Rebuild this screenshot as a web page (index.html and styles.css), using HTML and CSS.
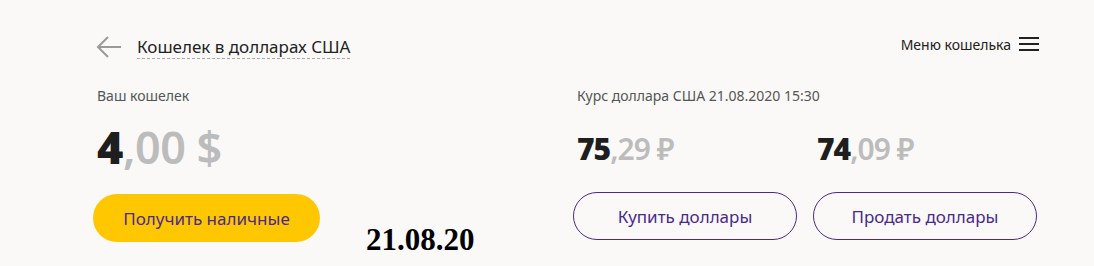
FILE: index.html
```html
<!DOCTYPE html>
<html lang="ru">

<head>
    <meta charset="UTF-8">
    <meta name="viewport" content="width=device-width, initial-scale=1.0">
    <title>Кошелек в долларах США</title>
    <link rel="stylesheet" href="styles.css">
</head>

<body>
    <div class="wallet">

        <!-- Header -->
        <div class="top">
            <div class="back">
                <svg class="back-arrow" width="26" height="24" viewBox="0 0 26 24">
                    <path d="M25 12H2M12 2L2 12l10 10" fill="none" stroke="#9a9a9a" stroke-width="2" />
                </svg>
                <span class="title">Кошелек в долларах США</span>
            </div>
            <div class="menu">
                Меню кошелька
                <svg class="burger" width="20" height="16" viewBox="0 0 20 16">
                    <path d="M0 2h20M0 8h20M0 14h20" stroke="#222" stroke-width="2" />
                </svg>
            </div>
        </div>

        <div class="cols">
            <!-- Balance -->
            <div class="col">
                <div class="label">Ваш кошелек</div>
                <div class="amount big"><b>4</b><span class="cents">,00 $</span></div>
                <div class="actions">
                    <button class="btn btn-yellow">Получить наличные</button>
                    <span class="stamp">21.08.20</span>
                </div>
            </div>

            <!-- Rates -->
            <div class="col">
                <div class="label">Курс доллара США 21.08.2020 15:30</div>
                <div class="rates">
                    <div class="amount"><b>75</b><span class="cents">,29 ₽</span></div>
                    <div class="amount"><b>74</b><span class="cents">,09 ₽</span></div>
                </div>
                <div class="actions pair">
                    <button class="btn btn-line">Купить доллары</button>
                    <button class="btn btn-line">Продать доллары</button>
                </div>
            </div>
        </div>

    </div>
</body>

</html>
```

FILE: styles.css
```css
body {
    margin: 0;
    background: #faf9f8;
    font-family: "Noto Sans", Arial, sans-serif;
    color: #222;
}

.wallet {
    width: 946px;
    padding: 34px 0 0 93px;
}

.top {
    display: flex;
    justify-content: space-between;
    align-items: center;
    height: 26px;
}

.back {
    display: flex;
    align-items: center;
    padding-left: 3px;
}

.back-arrow {
    margin-right: 15px;
}

.title {
    font-size: 17px;
    border-bottom: 1px dashed #aaa;
    line-height: 22px;
}

.menu {
    display: flex;
    align-items: center;
    font-size: 14px;
    margin-top: -6px;
}

.burger {
    margin-left: 8px;
}

.cols {
    display: grid;
    grid-template-columns: 464px 464px;
    gap: 16px;
    margin-top: 26px;
}

.label {
    font-size: 14px;
    color: #555;
    padding-left: 4px;
    line-height: 20px;
}

.amount {
    font-size: 30px;
    font-weight: 700;
    color: #1e1e1e;
    padding-left: 4px;
    line-height: 40px;
    letter-spacing: -1px;
}

.amount.big {
    font-size: 45px;
    line-height: 56px;
    margin-top: 13px;
    letter-spacing: -0.5px;
}

.cents {
    color: #bcbcbc;
    font-weight: 600;
}

.rates {
    display: grid;
    grid-template-columns: 240px 224px;
    margin-top: 23px;
}

.actions {
    display: flex;
    align-items: flex-start;
    margin-top: 19px;
}

.pair {
    gap: 16px;
    margin-top: 23px;
}

.btn {
    height: 48px;
    border-radius: 24px;
    font-family: inherit;
    font-size: 17px;
    color: #4a2a8e;
    cursor: pointer;
}

.btn-yellow {
    width: 227px;
    background: #ffc700;
    border: none;
}

.btn-line {
    width: 224px;
    background: transparent;
    border: 1px solid #4a2a8e;
}

.stamp {
    font-family: "Liberation Serif", "Times New Roman", serif;
    font-weight: 700;
    font-size: 31px;
    color: #000;
    margin-left: 46px;
    margin-top: 28px;
}
```
